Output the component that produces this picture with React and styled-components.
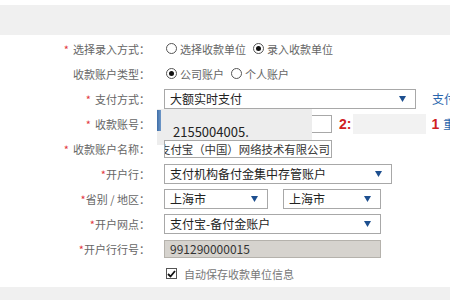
import React from 'react';
import styled, { createGlobalStyle } from 'styled-components';

const Global = createGlobalStyle`
  html, body {
    margin: 0;
    padding: 0;
    background: #fff;
    overflow: hidden;
  }
  body {
    font-family: "Noto Sans CJK SC", "Noto Sans", sans-serif;
  }
`;

const Page = styled.div`
  width: 450px;
  height: 300px;
  overflow: hidden;
  display: flex;
  flex-direction: column;
`;

const Band = styled.div`
  background: #f0f0f0;
  height: ${p => p.h}px;
  margin-top: ${p => p.mt || 0}px;
  flex-shrink: 0;
`;

const Form = styled.div`
  display: grid;
  grid-template-columns: 150px 1fr;
  column-gap: 14px;
  grid-auto-rows: 25px;
  align-items: center;
  padding-top: 1px;
`;

const Label = styled.div`
  text-align: right;
  font-size: 11px;
  color: #666;
  white-space: nowrap;
`;

const Star = styled.span`
  color: #e2363f;
  margin-right: ${p => (p.spaced ? 4 : 0)}px;
`;

const Cell = styled.div`
  display: flex;
  align-items: center;
  position: relative;
  height: 100%;
  white-space: nowrap;
`;

const Radio = styled.span`
  width: 11px;
  height: 11px;
  border: 1px solid #555;
  border-radius: 50%;
  box-sizing: border-box;
  display: inline-flex;
  align-items: center;
  justify-content: center;
  margin: 0 3px 0 2px;
  flex-shrink: 0;

  &::after {
    content: '';
    width: 5px;
    height: 5px;
    border-radius: 50%;
    background: ${p => (p.checked ? '#111' : 'transparent')};
  }
`;

const Option = styled.span`
  font-size: 11px;
  color: #666;
  margin-right: 5px;
`;

const SelectBox = styled.div`
  width: ${p => p.w}px;
  height: 20px;
  box-sizing: border-box;
  border: 1px solid #a8a8a8;
  margin-left: ${p => p.ml || 0}px;
  display: flex;
  align-items: center;
  justify-content: space-between;
  padding: 0 9px 0 5px;
  font-size: 12px;
  color: #222;
  background: #fff;
  flex-shrink: 0;
`;

const Arrow = () => (
  <svg width="7" height="6" viewBox="0 0 7 6">
    <path d="M0 0 L7 0 L3.5 6 Z" fill="#1d4f8f" />
  </svg>
);

const Select = ({ w, ml, children }) => (
  <SelectBox w={w} ml={ml}>
    <span>{children}</span>
    <Arrow />
  </SelectBox>
);

const Input = styled.div`
  width: ${p => p.w}px;
  height: 18px;
  box-sizing: border-box;
  border: 1px solid ${p => (p.disabled ? '#b5b2ac' : '#a8a8a8')};
  background: ${p => (p.disabled ? '#d6d3ce' : '#fff')};
  font-size: ${p => p.fs || 12}px;
  color: #333;
  display: flex;
  align-items: center;
  padding-left: 5px;
  overflow: hidden;
  flex-shrink: 0;
`;

const Scrolled = styled.span`
  margin-left: -11px;
  white-space: nowrap;
`;

const Popup = styled.div`
  position: absolute;
  left: -7px;
  top: -2px;
  width: 155px;
  height: 36px;
  background: #ededed;
  display: flex;
  align-items: center;
  padding-left: 16px;
  padding-top: 8px;
  box-sizing: border-box;
  font-size: 13px;
  color: #222;
`;

const Focus = styled.div`
  position: absolute;
  left: 0;
  top: 1px;
  width: 4px;
  height: 21px;
  background: linear-gradient(90deg, #3f6ea8, #6f98c8);
`;

const Red = styled.span`
  color: #d0201f;
  font-weight: bold;
  font-size: 14px;
  font-family: "Liberation Sans", Arial, sans-serif;
  margin-left: ${p => p.ml || 0}px;
`;

const Blur = styled.div`
  width: 73px;
  height: 20px;
  background: #f2f2f2;
  margin-left: 2px;
`;

const Link = styled.span`
  color: #2a66ad;
  font-size: 12px;
  margin-left: ${p => p.ml || 0}px;
`;

const Check = styled.span`
  width: 11px;
  height: 11px;
  border: 1px solid #555;
  box-sizing: border-box;
  display: inline-flex;
  align-items: center;
  justify-content: center;
  margin: 0 7px 0 2px;
  background: #fff;
`;

const CheckText = styled.span`
  font-size: 11px;
  color: #777;
`;

const Req = ({ spaced, children }) => (
  <Label>
    <Star spaced={spaced}>*</Star>
    {children}
  </Label>
);

export default function App() {
  return (
    <Page>
      <Global />
      <Band h={30} mt={5} />
      <Form>
        <Req spaced>选择录入方式：</Req>
        <Cell>
          <Radio />
          <Option>选择收款单位</Option>
          <Radio checked />
          <Option>录入收款单位</Option>
        </Cell>

        <Label>收款账户类型：</Label>
        <Cell>
          <Radio checked />
          <Option>公司账户</Option>
          <Radio />
          <Option>个人账户</Option>
        </Cell>

        <Req spaced>支付方式：</Req>
        <Cell>
          <Select w={252}>大额实时支付</Select>
          <Link ml={16}>支付</Link>
        </Cell>

        <Req spaced>收款账号：</Req>
        <Cell>
          <Input w={168} />
          <Red ml={7}>2:</Red>
          <Blur />
          <Red ml={5}>1</Red>
          <Link ml={4}>重</Link>
          <Popup>
            <Focus />
            2155004005.
          </Popup>
        </Cell>

        <Req spaced>收款账户名称：</Req>
        <Cell>
          <Input w={168} fs={11.4}>
            <Scrolled>支付宝（中国）网络技术有限公司</Scrolled>
          </Input>
        </Cell>

        <Req>开户行：</Req>
        <Cell>
          <Select w={228}>支付机构备付金集中存管账户</Select>
        </Cell>

        <Req>省别 / 地区：</Req>
        <Cell>
          <Select w={104}>上海市</Select>
          <Select w={98} ml={15}>上海市</Select>
        </Cell>

        <Req>开户网点：</Req>
        <Cell>
          <Select w={217}>支付宝-备付金账户</Select>
        </Cell>

        <Req>开户行行号：</Req>
        <Cell>
          <Input w={217} disabled>991290000015</Input>
        </Cell>

        <div />
        <Cell>
          <Check>
            <svg width="9" height="8" viewBox="0 0 9 8">
              <path d="M1 4 L3.5 6.5 L8 1" stroke="#111" strokeWidth="1.8" fill="none" />
            </svg>
          </Check>
          <CheckText>自动保存收款单位信息</CheckText>
        </Cell>
      </Form>
      <Band h={20} mt={1} />
    </Page>
  );
}
